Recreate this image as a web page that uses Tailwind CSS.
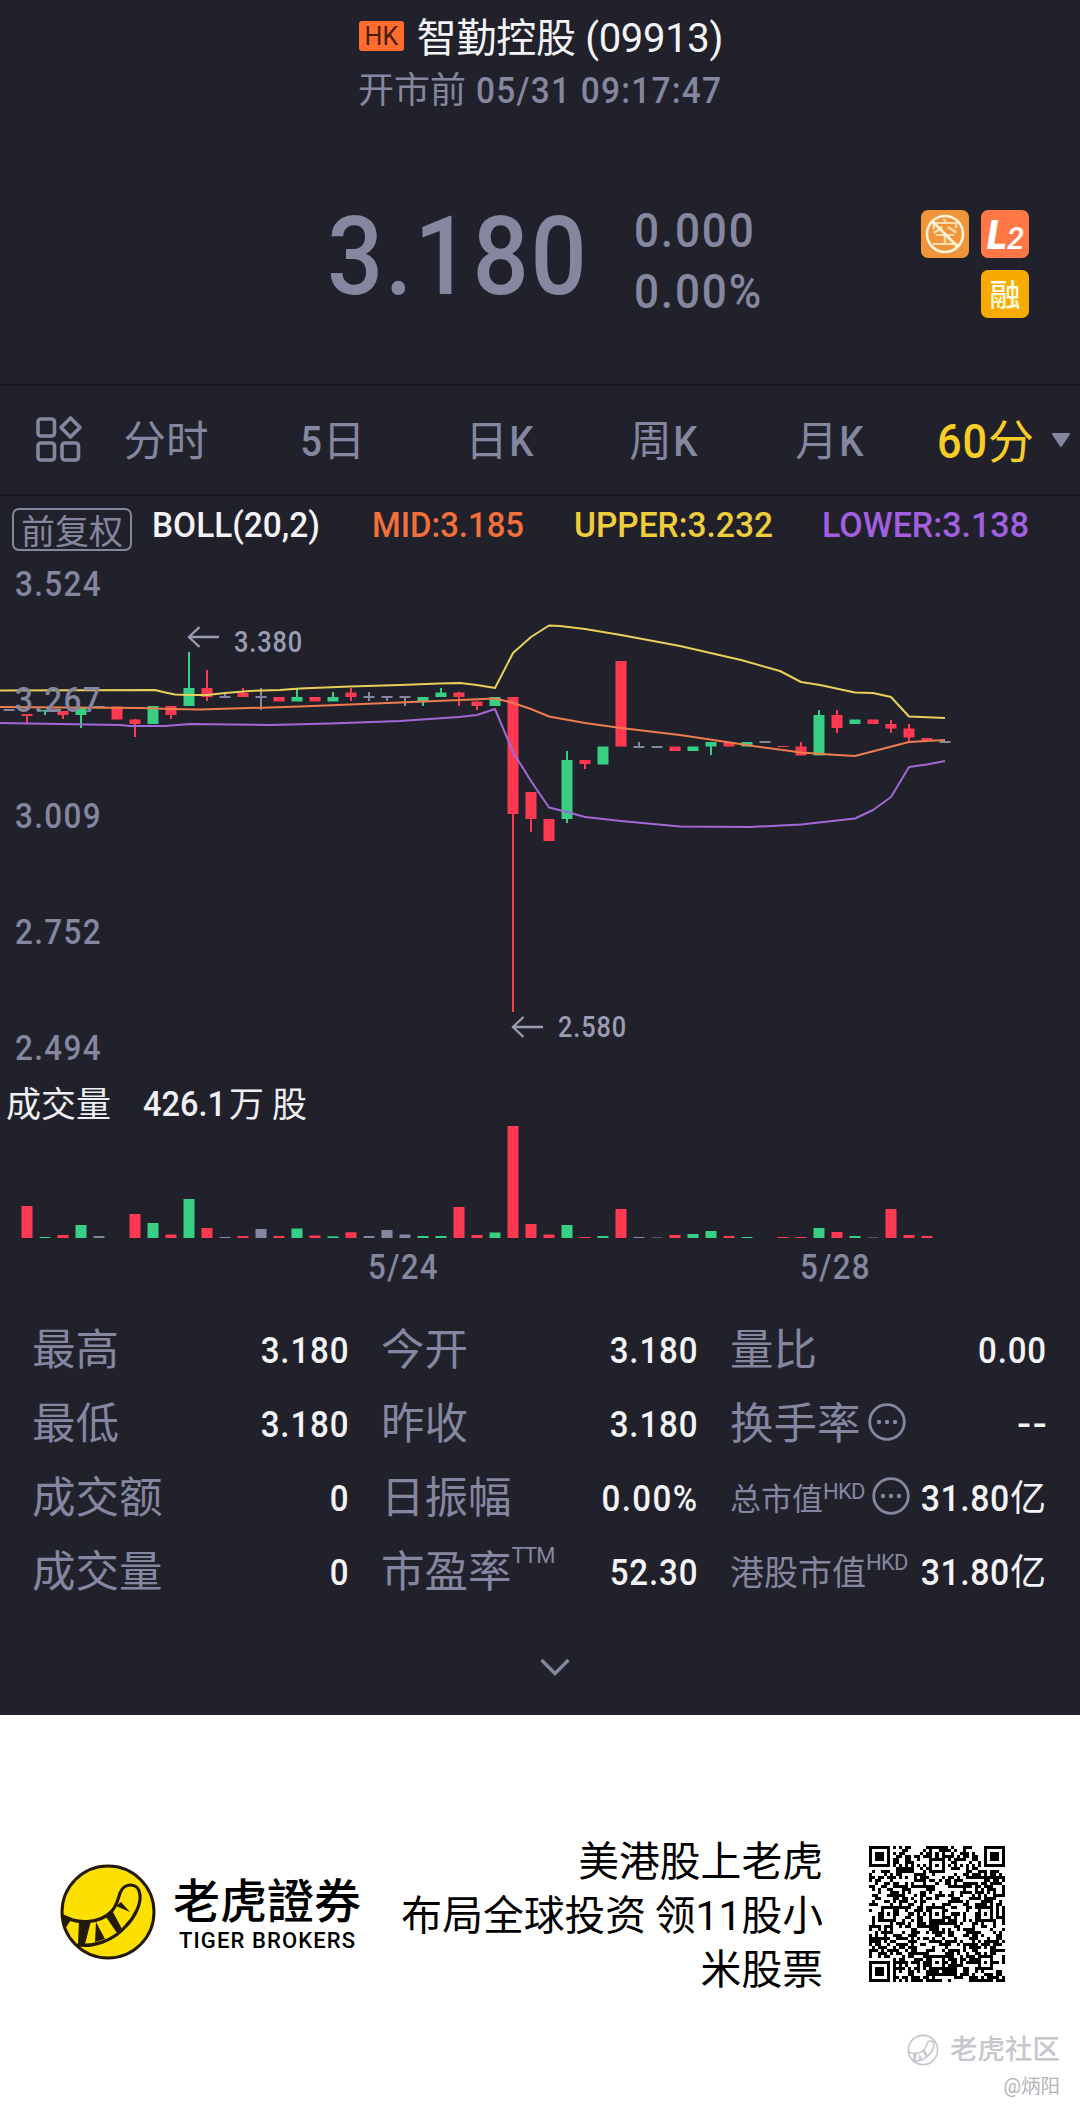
<!DOCTYPE html>
<html lang="zh-CN">
<head>
  <meta charset="UTF-8" />
  <meta name="viewport" content="width=device-width, initial-scale=1.0" />
  <title>智勤控股 (09913)</title>
  <script src="https://cdn.jsdelivr.net/npm/@tailwindcss/browser@4"></script>
</head>
<body class="w-[1080px] bg-white font-['Roboto','Noto_Sans_CJK_SC',sans-serif] leading-none">
  <main class="h-[1715px] bg-[#21212b] text-[#85869f] overflow-hidden">

    <!-- header -->
    <header class="h-[384px] pt-4">
      <div class="h-[42px] flex items-center justify-center gap-[13px]">
        <span class="w-[45px] h-[30px] mb-0.5 rounded-[3px] bg-[#ff6c2c] text-[#4a1c0a] text-[25px] flex items-center justify-center">HK</span>
        <h1 class="text-[40px] text-[#f4f4f6] tracking-[-0.3px] whitespace-nowrap pt-1 -mr-0.5">智勤控股 (09913)</h1>
      </div>
      <div class="h-9 mt-[15px] flex items-center justify-center gap-2.5 text-[36px] whitespace-nowrap">
        <span>开市前</span>
        <span class="font-medium w-[246px] origin-left scale-x-[0.93] tracking-[1.300px]">05/31 09:17:47</span>
      </div>
      <div class="mt-[101px] h-[108px] pl-[327px] pr-[51px] flex justify-between">
        <div class="flex">
          <div class="w-[307px] text-[110px] leading-[93px] font-medium"><span class="inline-block origin-left scale-x-[0.9] tracking-[2px]">3.180</span></div>
          <div class="text-[49px] font-medium">
            <div class="h-[61px] leading-[41px]"><span class="inline-block origin-left scale-x-[0.9] tracking-[2px]">0.000</span></div>
            <div class="leading-[41px]"><span class="inline-block origin-left scale-x-[0.9] tracking-[2px]">0.00%</span></div>
          </div>
        </div>
        <div class="w-[108px] flex flex-wrap justify-end gap-3">
          <svg class="size-12" viewBox="0 0 48 48">
            <rect width="48" height="48" rx="7" fill="#f0953a" />
            <text x="24" y="34" font-size="29" text-anchor="middle" fill="#ffdcae">空</text>
            <circle cx="24" cy="24" r="18" fill="none" stroke="#fff3d8" stroke-width="2.6" />
            <path d="M11.5 11.5 36.5 36.5" stroke="#fff3d8" stroke-width="2.8" />
          </svg>
          <svg class="size-12" viewBox="0 0 48 48">
            <rect width="48" height="48" rx="7" fill="#ff7846" />
            <text x="6" y="39" font-size="41" font-weight="900" font-style="italic" fill="#fff" textLength="20" lengthAdjust="spacingAndGlyphs">L</text>
            <text x="26" y="39" font-size="31" font-weight="500" font-style="italic" fill="#fff" textLength="17" lengthAdjust="spacingAndGlyphs">2</text>
          </svg>
          <span class="size-12 rounded-[7px] bg-[#f7ab00] text-[#fffbe0] text-[31px] font-medium flex items-center justify-center pt-0.5">融</span>
        </div>
      </div>
    </header>

    <!-- period tabs -->
    <nav class="h-28 border-y-2 border-[#14141e] flex items-center text-[42.500px] pt-1">
      <svg class="ml-[35px] w-12 h-12 -mt-1.5" viewBox="0 0 48 48" fill="none" stroke="#85869f" stroke-width="3.6" stroke-linejoin="round">
        <rect x="3" y="4" width="16.500" height="17" rx="3" />
        <rect x="3" y="28" width="16.500" height="17" rx="3" />
        <rect x="27" y="28" width="16.500" height="17" rx="3" />
        <path d="M35.500 3 45 12.500 35.500 22 26 12.500Z" />
      </svg>
      <div class="w-[166px] text-center">分时</div>
      <div class="w-[166px] text-center"><span class="inline-block scale-x-[0.9] font-medium">5</span>日</div>
      <div class="w-[166px] text-center pl-1">日<span class="inline-block scale-x-[0.9] font-medium">K</span></div>
      <div class="w-[166px] text-center">周<span class="inline-block scale-x-[0.9] font-medium">K</span></div>
      <div class="w-[166px] text-center">月<span class="inline-block scale-x-[0.9] font-medium">K</span></div>
      <div class="pl-[24px] flex items-center text-[#f7cd26] text-[46px]">
        <span class="w-[51px] origin-left scale-x-[0.9] font-medium text-[48px] tracking-[1px]">60</span>分
        <svg class="ml-[17px] -mt-1 w-5 h-4" viewBox="0 0 20 16" fill="#85869f" stroke="#85869f" stroke-width="2" stroke-linejoin="round"><path d="M2 2h16l-8 12z" /></svg>
      </div>
    </nav>

    <!-- indicator legend + price chart + volume chart -->
    <svg class="block w-[1080px] h-[802px]" viewBox="0 496 1080 802" font-size="35" font-weight="500">
      <rect x="13" y="509" width="118" height="41" rx="6" fill="none" stroke="#85869f" stroke-width="2" />
      <text x="21" y="544" font-size="34" font-weight="400" fill="#85869f">前复权</text>
      <text x="152" y="537" textLength="168" lengthAdjust="spacingAndGlyphs" fill="#f4f4f6">BOLL(20,2)</text>
      <text x="372" y="537" textLength="152" lengthAdjust="spacingAndGlyphs" fill="#f4703a">MID:3.185</text>
      <text x="574" y="537" textLength="199" lengthAdjust="spacingAndGlyphs" fill="#f0cd3a">UPPER:3.232</text>
      <text x="822" y="537" textLength="207" lengthAdjust="spacingAndGlyphs" fill="#a25fe0">LOWER:3.138</text>

      <g id="candles"></g>

      <g fill="none" stroke-width="2" stroke-linejoin="round">
        <polyline stroke="#ead05a" points="0,690.5 155,690 163,692 175,694.5 190,695 207,695 225,693 250,691 280,690 300,688.5 350,686.5 400,685 440,683.5 460,683 477,685 495,688 513,653 531,637 549,625.5 560,626 585,629 621,635 680,646 741,660 780,671 801,682 820,685 855,692.5 873,693 891,697 909,716.500 945,718" />
        <polyline stroke="#ee7c4c" points="0,707 140,708 171,709 200,709.500 300,706.500 400,702.500 460,700 495,698.500 510,702 531,709 549,716.500 585,723 621,728 680,735 740,744 760,747 783,750 801,752.500 837,755 855,756 880,749.500 909,742 945,740" />
        <polyline stroke="#a368d8" points="0,723 120,725 130,726 165,726 190,724 270,725 330,723.500 400,721 459,717 477,715 495,709 513,752 531,781 549,807.500 567,812 585,817 621,821 680,826.500 750,827 801,824.500 837,820.500 855,818.500 873,810 891,797 909,767 927,764.500 945,761" />
      </g>

      <!-- narrow digits: glyphs squeezed, spacing opened up -->
      <g fill="#85869f" letter-spacing="1.500">
        <text x="15" y="596" textLength="87" lengthAdjust="spacingAndGlyphs">3.524</text>
        <text x="15" y="712" textLength="87" lengthAdjust="spacingAndGlyphs">3.267</text>
        <text x="15" y="828" textLength="87" lengthAdjust="spacingAndGlyphs">3.009</text>
        <text x="15" y="944" textLength="87" lengthAdjust="spacingAndGlyphs">2.752</text>
        <text x="15" y="1060" textLength="87" lengthAdjust="spacingAndGlyphs">2.494</text>
        <text x="368" y="1279" textLength="71" lengthAdjust="spacingAndGlyphs">5/24</text>
        <text x="800" y="1279" textLength="71" lengthAdjust="spacingAndGlyphs">5/28</text>
      </g>

      <g fill="#9b9cb3" font-size="29" letter-spacing="1">
        <text x="234" y="652" textLength="69" lengthAdjust="spacingAndGlyphs">3.380</text>
        <text x="558" y="1037" textLength="69" lengthAdjust="spacingAndGlyphs">2.580</text>
      </g>
      <g fill="none" stroke="#9b9cb3" stroke-width="2.4">
        <path d="M219 637h-30M199.500 627l-10.500 10 10.500 10" />
        <path d="M543 1027h-30M523.500 1017l-10.500 10 10.500 10" />
      </g>

      <g fill="#f0f0f4">
        <text x="6" y="1117" font-weight="400">成交量</text>
        <text x="143" y="1116" textLength="83" lengthAdjust="spacingAndGlyphs">426.1</text>
        <text x="229" y="1117" font-weight="400">万</text>
        <text x="272" y="1117" font-weight="400">股</text>
      </g>
      <g id="volumes"></g>
    </svg>

    <!-- quote details -->
    <section class="mt-4 pl-8 pr-[33px] grid grid-cols-[316px_316px_316px] gap-x-[33px] auto-rows-[74px] items-center text-[43.500px] whitespace-nowrap">
      <div class="flex items-center justify-between"><span>最高</span><b class="origin-right scale-x-[0.92] tracking-[0.900px] -mr-px text-[36px] font-medium text-[#f4f4f6]">3.180</b></div>
      <div class="flex items-center justify-between"><span>今开</span><b class="origin-right scale-x-[0.92] tracking-[0.900px] -mr-px text-[36px] font-medium text-[#f4f4f6]">3.180</b></div>
      <div class="flex items-center justify-between"><span>量比</span><b class="origin-right scale-x-[0.92] tracking-[0.900px] -mr-px text-[36px] font-medium text-[#f4f4f6]">0.00</b></div>

      <div class="flex items-center justify-between"><span>最低</span><b class="origin-right scale-x-[0.92] tracking-[0.900px] -mr-px text-[36px] font-medium text-[#f4f4f6]">3.180</b></div>
      <div class="flex items-center justify-between"><span>昨收</span><b class="origin-right scale-x-[0.92] tracking-[0.900px] -mr-px text-[36px] font-medium text-[#f4f4f6]">3.180</b></div>
      <div class="flex items-center justify-between">
        <span class="flex items-center gap-[7px]">换手率
          <svg class="size-[38px] -mt-1.5" viewBox="0 0 38 38" fill="#85869f"><circle cx="19" cy="19" r="17.300" fill="none" stroke="#85869f" stroke-width="2.800" /><circle cx="11" cy="19" r="2.200" /><circle cx="19" cy="19" r="2.200" /><circle cx="27" cy="19" r="2.200" /></svg>
        </span>
        <b class="origin-right scale-x-[1.150] text-[36px] font-medium text-[#f4f4f6] tracking-[1.500px] -mr-0.5">--</b>
      </div>

      <div class="flex items-center justify-between"><span>成交额</span><b class="origin-right scale-x-[0.92] text-[36px] font-medium text-[#f4f4f6]">0</b></div>
      <div class="flex items-center justify-between"><span>日振幅</span><b class="origin-right scale-x-[0.92] tracking-[1.500px] -mr-px text-[36px] font-medium text-[#f4f4f6]">0.00%</b></div>
      <div class="flex items-center justify-between">
        <span class="flex items-center text-[31px]">总市值<span class="text-[22px] tracking-[-0.800px] mb-3.5">HKD</span>
          <svg class="size-[38px] ml-[7px] -mt-1.5" viewBox="0 0 38 38" fill="#85869f"><circle cx="19" cy="19" r="17.300" fill="none" stroke="#85869f" stroke-width="2.800" /><circle cx="11" cy="19" r="2.200" /><circle cx="19" cy="19" r="2.200" /><circle cx="27" cy="19" r="2.200" /></svg>
        </span>
        <span class="text-[36px] text-[#f4f4f6]"><b class="inline-block origin-right scale-x-[0.94] tracking-[0.600px] font-medium">31.80</b>亿</span>
      </div>

      <div class="flex items-center justify-between"><span>成交量</span><b class="origin-right scale-x-[0.92] text-[36px] font-medium text-[#f4f4f6]">0</b></div>
      <div class="flex items-center justify-between"><span class="flex items-center">市盈率<span class="text-[22px] tracking-[-0.800px] mb-[34px]">TTM</span></span><b class="origin-right scale-x-[0.92] tracking-[0.900px] -mr-px text-[36px] font-medium text-[#f4f4f6]">52.30</b></div>
      <div class="flex items-center justify-between">
        <span class="flex items-center text-[34px]">港股市值<span class="text-[22px] tracking-[-0.800px] mb-5">HKD</span></span>
        <span class="text-[36px] text-[#f4f4f6]"><b class="inline-block origin-right scale-x-[0.94] tracking-[0.600px] font-medium">31.80</b>亿</span>
      </div>
    </section>

    <svg class="mt-[47px] ml-[539px] w-8 h-5" viewBox="0 0 32 20" fill="none" stroke="#85869f" stroke-width="3.400"><path d="M2.500 3 16 16.500 29.500 3" /></svg>
  </main>

  <!-- broker footer -->
  <footer class="h-[397px] text-black">
    <div class="h-[290px] pt-[117px] pl-[60px] pr-[75px] flex items-start">
      <svg class="mt-8 w-24 h-24" viewBox="0 0 96 96" fill="none" stroke="#241a08" stroke-width="3.200">
        <circle cx="48" cy="48" r="46" fill="#fde000" stroke-width="3" />
        <path d="M2 52C17 60 39 60 51 48 57 42 58 35 60 29 64 18 79 18 80 31 81 40 75 53 66 62 53 77 34 83 17 81" />
        <path d="M2 50 12 54 5 65ZM19 57 31 57 25 80 18 80ZM36 58 45 75 35 78ZM46 53 53 48 62 65 57 69ZM56 42 61 38 70 48Z" fill="#241a08" stroke="none" />
      </svg>
      <div class="ml-[17px] mt-[43px] w-[200px]">
        <div class="text-[47px] font-medium font-['Noto_Sans_CJK_TC',sans-serif] leading-[46px] whitespace-nowrap">老虎證券</div>
        <div class="mt-[9px] ml-[6px] text-[22px] font-medium tracking-[1.100px] whitespace-nowrap">TIGER BROKERS</div>
      </div>
      <p class="flex-1 text-right text-[40.800px] leading-[54px] pt-[3px] -mr-0.5 whitespace-nowrap">美港股上老虎<br />布局全球投资<span class="tracking-[-1.500px]"> </span>领11股小<br />米股票</p>
      <svg class="ml-12 mt-[14px] size-[136px]" viewBox="0 0 45 45" shape-rendering="crispEdges"><path id="qr" fill="#000" /></svg>
    </div>
    <div class="pr-5 flex flex-col items-end text-[#c6c6cc]">
      <div class="mt-[29px] flex items-center gap-[11px]">
        <svg class="size-8" viewBox="0 0 96 96" fill="none" stroke="#c6c6cc" stroke-width="5">
          <circle cx="48" cy="48" r="44" />
          <path d="M4 54C17 60 39 60 51 48 57 42 58 35 60 29 64 18 79 18 80 31 81 40 75 53 66 62 53 77 34 83 17 81" />
          <path d="M19 57 31 57 25 80 18 80ZM36 58 45 75 35 78ZM46 53 53 48 62 65 57 69Z" fill="#c6c6cc" stroke="none" />
        </svg>
        <span class="text-[27.500px] font-medium">老虎社区</span>
      </div>
      <div class="mt-[11px] text-[19.500px] text-[#b4b4b8]">@炳阳</div>
    </div>
  </footer>

  <script>
    const colors = { r: "#ff3950", g: "#37cf83", n: "#85869f" };

    // [color, body top, body bottom, wick top, wick bottom], one candle every 18px
    const candles = [
      ["n", 709, 711], ["r", 714, 716, 714, 723], ["g", 710, 711.5, 710, 715], ["r", 711, 715, 711, 719],
      ["g", 708, 715, 708, 728], ["n", 706, 708], ["r", 706.5, 719.5], ["r", 719.5, 724, 719, 737],
      ["g", 706, 724], ["r", 706, 715, 706, 719], ["g", 688, 706, 652, 706], ["r", 688, 697, 670, 701],
      ["n", 696, 698, 693, 697], ["r", 693, 697, 688, 697], ["n", 696, 698, 688, 710], ["r", 697, 701.5],
      ["g", 697, 701.5, 688, 701], ["r", 697, 701.5], ["g", 697, 701.5, 692, 701], ["r", 692.5, 697, 688, 701],
      ["n", 696, 698, 692, 701], ["n", 696, 698, 697, 701], ["n", 696, 698, 697, 706], ["g", 697, 702, 697, 706],
      ["g", 692.5, 697, 688, 697], ["r", 692.5, 697, 692, 706], ["r", 701.5, 706, 701, 710], ["g", 697, 706],
      ["r", 697, 814, 697, 1012], ["r", 792, 819, 792, 832], ["r", 819, 841], ["g", 760, 819, 751, 823],
      ["r", 760, 764, 760, 769], ["g", 746.5, 764.5], ["r", 661, 746.5], ["n", 746, 748, 742, 747],
      ["n", 746, 748], ["r", 746.5, 751], ["g", 746.5, 751], ["g", 742, 746.5, 742, 755],
      ["r", 742, 746.5], ["g", 742, 746.5], ["n", 741, 743], ["r", 746, 747],
      ["r", 746.5, 755.5, 742, 755], ["g", 715, 755.5, 710, 755], ["r", 715, 728, 710, 733], ["g", 719.5, 724],
      ["r", 719.5, 724], ["r", 724, 728.5, 720, 733], ["r", 728.5, 737.5, 724, 742], ["r", 738, 741], ["n", 741, 743]
    ];
    document.getElementById("candles").innerHTML = candles.map(([c, top, bottom, high, low], i) => {
      const x = 9 + i * 18;
      let out = `<rect x="${x - 5.5}" y="${top}" width="11" height="${bottom - top}" fill="${colors[c]}"/>`;
      if (high) out += `<rect x="${x - 1}" y="${high}" width="2" height="${low - high}" fill="${colors[c]}"/>`;
      return out;
    }).join("");

    const volumes = "r32 g1 r3 g13 n2 n0 r24 g15 r3.5 g39 r10 n1 r2 n9 r2 g9.5 r2.5 g1.7 r5.7 n2 n8 n3.5 g2 g2 r31 r3 g5.5 r112 r14 r3.5 g13 r1 g2 r29 n1 n0.5 r3 g4 g7 r2 g1 n0 r1 r1 g10 r6 g2 n0.5 r29 r3 r2";
    document.getElementById("volumes").innerHTML = volumes.split(" ").map((v, i) => {
      const h = Number(v.slice(1));
      return `<rect x="${21.5 + i * 18}" y="${1238 - h}" width="11" height="${h}" fill="${colors[v[0]]}"/>`;
    }).join("");

    // 45x45 code: finder, alignment and timing patterns, the rest is filler
    const ring = (x, y, cx, cy) => Math.max(Math.abs(x - cx), Math.abs(y - cy));
    let seed = 9913, d = "";
    for (let y = 0; y < 45; y++) {
      for (let x = 0; x < 45; x++) {
        seed = (seed * 1103515245 + 12345) % 2147483648;
        let on = (seed >> 12) % 100 < 50;
        if (x === 6 || y === 6) on = (x + y) % 2 === 0;
        for (const [cx, cy] of [[22, 6], [6, 22], [22, 22], [38, 22], [22, 38], [38, 38]]) {
          const r = ring(x, y, cx, cy);
          if (r < 3) on = r !== 1;
        }
        for (const [cx, cy] of [[3, 3], [41, 3], [3, 41]]) {
          const r = ring(x, y, cx, cy);
          if (r < 5) on = r < 2 || r === 3;
        }
        if (on) d += `M${x} ${y}h1v1h-1z`;
      }
    }
    document.getElementById("qr").setAttribute("d", d);
  </script>
</body>
</html>
